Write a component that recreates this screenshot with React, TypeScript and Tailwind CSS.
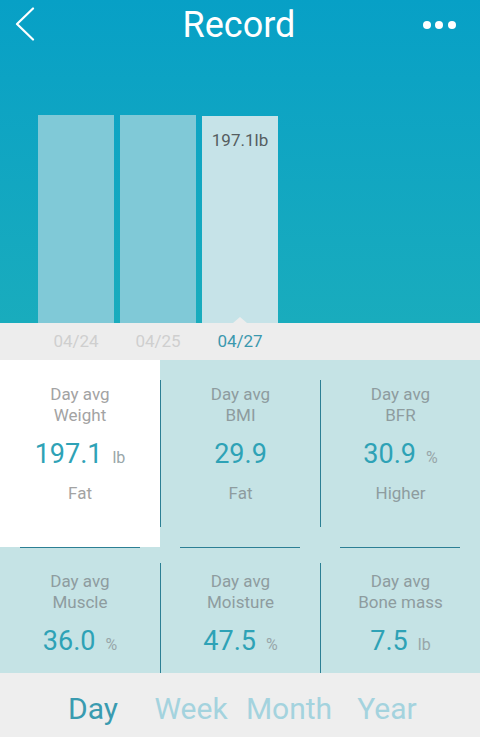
import React from 'react';

const font = { fontFamily: 'Roboto, "Noto Sans", sans-serif' };

const bars = [
  { date: '04/24', h: 'h-[208px]', active: false },
  { date: '04/25', h: 'h-[208px]', active: false },
  { date: '04/27', h: 'h-[207px]', active: true },
];

const topRow = [
  { name: 'Weight', value: '197.1', unit: 'lb', status: 'Fat', selected: true },
  { name: 'BMI', value: '29.9', unit: '', status: 'Fat', selected: false },
  { name: 'BFR', value: '30.9', unit: '%', status: 'Higher', selected: false },
];

const bottomRow = [
  { name: 'Muscle', value: '36.0', unit: '%' },
  { name: 'Moisture', value: '47.5', unit: '%' },
  { name: 'Bone mass', value: '7.5', unit: 'lb' },
];

function Value({ value, unit }: { value: string; unit: string }) {
  return (
    <div className="flex items-baseline justify-center gap-[10px] h-[34px] leading-[34px]">
      <span className="text-[27px] text-[#2ea2b6]">{value}</span>
      {unit && <span className="text-[16px] text-[#98a6a9]">{unit}</span>}
    </div>
  );
}

export default function App() {
  return (
    <div className="w-[480px] h-[737px] overflow-hidden flex flex-col bg-[#c5e3e5]" style={font}>
      {/* header + chart */}
      <div className="h-[323px] flex flex-col bg-gradient-to-b from-[#07a0c6] to-[#19acbd]">
        <div className="h-[50px] flex items-center justify-between pl-[15px] pr-[24px]">
          <svg width="20" height="34" viewBox="0 0 20 34" fill="none" className="mt-[-2px]">
            <path d="M18 1.5 L2 17 L18 32.5" stroke="white" strokeWidth="2.2" strokeLinecap="round" strokeLinejoin="round" />
          </svg>
          <h1 className="text-white text-[36px] leading-none ml-[20px]">Record</h1>
          <div className="flex gap-[4.5px]">
            <span className="w-[8px] h-[8px] rounded-full bg-white" />
            <span className="w-[8px] h-[8px] rounded-full bg-white" />
            <span className="w-[8px] h-[8px] rounded-full bg-white" />
          </div>
        </div>
        <div className="flex-1 flex items-end gap-[6px] pl-[38px]">
          {bars.map((b) => (
            <div
              key={b.date}
              className={`w-[76px] ${b.h} flex flex-col items-center justify-between ${b.active ? 'bg-[#c6e3e8]' : 'bg-[#80c9d7]'}`}
            >
              {b.active ? (
                <span className="mt-[14px] text-[17px] leading-5 text-[#555d60]">197.1lb</span>
              ) : (
                <span />
              )}
              {b.active && (
                <span className="w-0 h-0 border-l-[7px] border-r-[7px] border-b-[6px] border-l-transparent border-r-transparent border-b-[#ededed]" />
              )}
            </div>
          ))}
        </div>
      </div>

      {/* dates */}
      <div className="h-[37px] bg-[#ededed] flex items-center gap-[6px] pl-[38px]">
        {bars.map((b) => (
          <span
            key={b.date}
            className={`w-[76px] text-center text-[17px] ${b.active ? 'text-[#3b98ae]' : 'text-[#cfcfcf]'}`}
          >
            {b.date}
          </span>
        ))}
      </div>

      {/* top row */}
      <div className="h-[187px] flex">
        {topRow.map((c, i) => (
          <div key={c.name} className={`w-[160px] flex ${c.selected ? 'bg-white' : ''}`}>
            {i > 0 && <div className="w-px mt-[20px] mb-[20px] bg-[#2c7f94]" />}
            <div className="flex-1 flex flex-col items-center pt-[24px] text-[17px] leading-[21px]">
              <span className={c.selected ? 'text-[#a3a3a3]' : 'text-[#8e9c9f]'}>Day avg</span>
              <span className={c.selected ? 'text-[#a3a3a3]' : 'text-[#8e9c9f]'}>{c.name}</span>
              <div className="mt-[11px]">
                <Value value={c.value} unit={c.unit} />
              </div>
              <span className={`mt-[12px] ${c.selected ? 'text-[#a3a3a3]' : 'text-[#8e9c9f]'}`}>{c.status}</span>
            </div>
          </div>
        ))}
      </div>

      {/* row separators */}
      <div className="h-px flex">
        {[0, 1, 2].map((i) => (
          <div key={i} className="w-[160px] px-[20px]">
            <div className="h-px bg-[#2c7f94]" />
          </div>
        ))}
      </div>

      {/* bottom row */}
      <div className="h-[125px] flex">
        {bottomRow.map((c, i) => (
          <div key={c.name} className="w-[160px] flex">
            {i > 0 && <div className="w-px mt-[15px] bg-[#2c7f94]" />}
            <div className="flex-1 flex flex-col items-center pt-[23px] text-[17px] leading-[21px] text-[#8e9c9f]">
              <span>Day avg</span>
              <span>{c.name}</span>
              <div className="mt-[11px]">
                <Value value={c.value} unit={c.unit} />
              </div>
            </div>
          </div>
        ))}
      </div>

      {/* tabs */}
      <div className="flex-1 bg-[#eeeeee] flex items-center pt-[6px]">
        <div className="w-[392px] mx-auto flex text-[30px]">
          <span className="flex-1 text-center text-[#3a9bb0]">Day</span>
          <span className="flex-1 text-center text-[#a4d3de]">Week</span>
          <span className="flex-1 text-center text-[#a4d3de]">Month</span>
          <span className="flex-1 text-center text-[#a4d3de]">Year</span>
        </div>
      </div>
    </div>
  );
}
